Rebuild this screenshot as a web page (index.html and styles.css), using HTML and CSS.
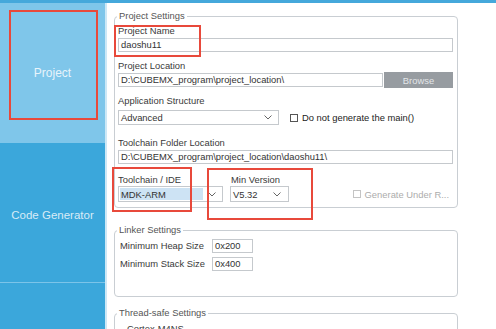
FILE: index.html
```html
<!DOCTYPE html>
<html lang="en">

<head>
  <meta charset="UTF-8">
  <meta name="viewport" content="width=device-width, initial-scale=1.0">
  <title>Project Manager</title>
  <link rel="stylesheet" href="styles.css">
</head>

<body>
  <div class="page">
    <div class="topbar"></div>

    <div class="main">
      <nav class="sidebar">
        <div class="tab active">Project</div>
        <div class="tab tab-code">Code Generator</div>
        <div class="tab tab-rest"></div>
      </nav>
      <div class="divider"></div>

      <div class="content">
        <fieldset class="group group-project">
          <legend>Project Settings</legend>

          <div class="field">
            <div class="label">Project Name</div>
            <div class="input">daoshu11</div>
          </div>

          <div class="field field-location">
            <div class="label">Project Location</div>
            <div class="row">
              <div class="input input-grow">D:\CUBEMX_program\project_location\</div>
              <div class="btn">Browse</div>
            </div>
          </div>

          <div class="field field-structure">
            <div class="label">Application Structure</div>
            <div class="row">
              <div class="select select-structure">
                <span class="select-value">Advanced</span>
                <span class="chevron">
                  <svg width="8" height="5" viewBox="0 0 8 5"><path d="M0.5 0.5 L4 4 L7.5 0.5" fill="none" stroke="#666" /></svg>
                </span>
              </div>
              <div class="check">
                <span class="box"></span>
                <span>Do not generate the main()</span>
              </div>
            </div>
          </div>

          <div class="field field-folder">
            <div class="label">Toolchain Folder Location</div>
            <div class="input">D:\CUBEMX_program\project_location\daoshu11\</div>
          </div>

          <div class="row row-toolchain">
            <div class="field field-ide">
              <div class="label">Toolchain / IDE</div>
              <div class="select select-ide">
                <span class="select-value selected">MDK-ARM</span>
                <span class="chevron">
                  <svg width="8" height="5" viewBox="0 0 8 5"><path d="M0.5 0.5 L4 4 L7.5 0.5" fill="none" stroke="#666" /></svg>
                </span>
              </div>
            </div>
            <div class="field field-version">
              <div class="label">Min Version</div>
              <div class="select select-version">
                <span class="select-value">V5.32</span>
                <span class="chevron">
                  <svg width="8" height="5" viewBox="0 0 8 5"><path d="M0.5 0.5 L4 4 L7.5 0.5" fill="none" stroke="#666" /></svg>
                </span>
              </div>
            </div>
            <div class="check check-disabled">
              <span class="box"></span>
              <span>Generate Under R...</span>
            </div>
          </div>
        </fieldset>

        <fieldset class="group group-linker">
          <legend>Linker Settings</legend>
          <div class="linker-grid">
            <div class="label">Minimum Heap Size</div>
            <div class="input">0x200</div>
            <div class="label">Minimum Stack Size</div>
            <div class="input">0x400</div>
          </div>
        </fieldset>

        <fieldset class="group group-thread">
          <legend>Thread-safe Settings</legend>
          <div class="thread-item">Cortex-M4NS</div>
        </fieldset>
      </div>
    </div>

    <!-- red annotation boxes -->
    <div class="mark mark-tab"></div>
    <div class="mark mark-name"></div>
    <div class="mark mark-ide"></div>
    <div class="mark mark-version"></div>
  </div>
</body>

</html>
```

FILE: styles.css
```css
* {
  margin: 0;
  padding: 0;
  box-sizing: border-box;
}

body {
  font-family: "Liberation Sans", Arial, sans-serif;
  background: white;
  width: 496px;
  height: 329px;
  overflow: hidden;
}

.page {
  position: relative;
  width: 496px;
  height: 329px;
  overflow: hidden;
}

.topbar {
  height: 3px;
  background: #45a8db;
}

.main {
  display: flex;
  height: 326px;
}

/* sidebar */

.sidebar {
  width: 105px;
  display: flex;
  flex-direction: column;
}

.tab {
  height: 140px;
  display: flex;
  justify-content: center;
  align-items: center;
  background: #3ba7db;
  color: #d8ebf7;
  font-size: 11.5px;
}

.tab.active {
  background: #7fc6ea;
  color: #e8f4fb;
  font-size: 12px;
}

.tab-code {
  padding-top: 4px;
  border-bottom: 1px solid #7cc4e9;
}

.tab-rest {
  flex: 1;
  height: auto;
}

.divider {
  width: 2px;
  background: #cde8f6;
}

/* content */

.content {
  flex: 1;
  padding: 7px 0 0 7px;
  font-size: 9.4px;
  color: #333;
}

.group {
  width: 344px;
  border: 1px solid #c9ced3;
  border-radius: 4px;
  padding: 3px 4px 5px 3px;
}

.group legend {
  padding: 0 2px;
  margin-left: -1px;
  line-height: 12px;
  color: #555;
}

.label {
  line-height: 12px;
  height: 12px;
  margin-bottom: 1px;
  color: #3a3a3a;
  white-space: nowrap;
}

.input {
  height: 14px;
  line-height: 12px;
  border: 1px solid #c5c9cd;
  padding-left: 2px;
  background: white;
  white-space: nowrap;
  overflow: hidden;
}

.row {
  display: flex;
  align-items: center;
}

.input-grow {
  flex: 1;
}

.btn {
  width: 69px;
  height: 16px;
  margin-left: 1px;
  background: #979ca1;
  color: #e3e6e9;
  display: flex;
  justify-content: center;
  align-items: center;
}

.field-location {
  margin-top: 8px;
}

.field-location .label {
  margin-bottom: 0;
}

.field-structure {
  margin-top: 7px;
}

.field-structure .label {
  margin-bottom: 3px;
}

.field-folder {
  margin-top: 12px;
}

.select {
  display: flex;
  align-items: stretch;
  border: 1px solid #c5c9cd;
  background: white;
  padding: 1px;
}

.select-value {
  flex: 1;
  padding-left: 1px;
  display: flex;
  align-items: center;
  white-space: nowrap;
}

.select-value.selected {
  background: #cde3f4;
}

.chevron {
  width: 18px;
  display: flex;
  justify-content: center;
  align-items: center;
}

.select-structure {
  width: 161px;
  height: 15px;
}

.check {
  display: flex;
  align-items: center;
  gap: 4px;
  margin-left: 11px;
  color: #222;
}

.box {
  width: 8px;
  height: 8px;
  border: 1px solid #555;
  background: white;
}

.row-toolchain {
  margin-top: 10px;
  align-items: flex-end;
}

.row-toolchain .label {
  margin-bottom: 0;
}

.field-ide {
  width: 105px;
}

.select-ide {
  height: 16px;
}

.field-version {
  margin-left: 7px;
  width: 59px;
}

.field-version .label {
  padding-left: 1px;
}

.select-version {
  height: 16px;
}

.select-version .chevron {
  width: 20px;
}

.check-disabled {
  margin-left: auto;
  margin-right: 4px;
  height: 16px;
  color: #acacac;
}

.check-disabled .box {
  border-color: #c4c4c4;
}

.group-linker {
  margin-top: 16px;
  padding: 3px 4px 25px 3px;
}

.linker-grid {
  display: grid;
  grid-template-columns: 92px 41px;
  row-gap: 4px;
  padding-left: 2px;
}

.linker-grid .label {
  height: 14px;
  line-height: 14px;
  margin: 0;
}

.group-thread {
  margin-top: 10px;
  height: 60px;
}

.thread-item {
  padding: 1px 0 0 9px;
  line-height: 12px;
  color: #3a3a3a;
}

/* annotation marks */

.mark {
  position: absolute;
  border: 2px solid #e8493b;
}

.mark-tab {
  left: 9px;
  top: 10px;
  width: 89px;
  height: 110px;
}

.mark-name {
  left: 114px;
  top: 25px;
  width: 87px;
  height: 32px;
}

.mark-ide {
  left: 112px;
  top: 167px;
  width: 80px;
  height: 45px;
}

.mark-version {
  left: 207px;
  top: 168px;
  width: 106px;
  height: 52px;
}
```
